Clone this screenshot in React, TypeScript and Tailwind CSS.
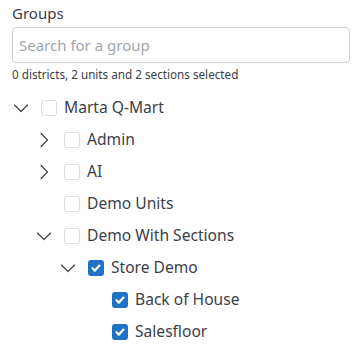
import React from 'react'

type Node = {
    label: string
    depth: number
    expander?: 'open' | 'closed'
    checked?: boolean
}

const rows: Node[] = [
    { label: 'Marta Q-Mart', depth: 0, expander: 'open' },
    { label: 'Admin', depth: 1, expander: 'closed' },
    { label: 'AI', depth: 1, expander: 'closed' },
    { label: 'Demo Units', depth: 1 },
    { label: 'Demo With Sections', depth: 1, expander: 'open' },
    { label: 'Store Demo', depth: 2, expander: 'open', checked: true },
    { label: 'Back of House', depth: 3, checked: true },
    { label: 'Salesfloor', depth: 3, checked: true },
]

const Chevron = ({ open }: { open: boolean }) => (
    <svg width="16" height="16" viewBox="0 0 16 16" fill="none" stroke="#3b4048" strokeWidth="1.2" strokeLinecap="round" strokeLinejoin="round">
        {open ? <path d="M1.5 5l6.5 6.5 6.5-6.5" /> : <path d="M5 1.5l6.5 6.5-6.5 6.5" />}
    </svg>
)

const Checkbox = ({ checked }: { checked?: boolean }) =>
    checked ? (
        <span className="flex h-4 w-4 items-center justify-center rounded-[3px] bg-[#1f72c4]">
            <svg width="12" height="12" viewBox="0 0 12 12" fill="none" stroke="white" strokeWidth="2.2" strokeLinecap="round" strokeLinejoin="round">
                <path d="M2.5 6.2l2.4 2.4 4.6-5" />
            </svg>
        </span>
    ) : (
        <span className="h-4 w-4 rounded-[3px] border border-[#d9dce0] bg-white" />
    )

const pad = ['pl-[9px]', 'pl-[32px]', 'pl-[56px]', 'pl-[80px]']

export default function App() {
    return (
        <div className="w-[362px] h-[350px] bg-white px-3 pt-[2px] text-[#3b4048]" style={{ fontFamily: '"Noto Sans", sans-serif' }}>
            <label className="block text-[15px] leading-[22px]">Groups</label>
            <div className="mt-[3px] flex h-9 w-[338px] items-center rounded-[4px] border border-[#c9d1d9] px-[6px]">
                <span className="text-[15px] text-[#a2a6ab]">Search for a group</span>
            </div>
            <p className="mt-[2px] text-[11.7px] leading-[18px]">0 districts, 2 units and 2 sections selected</p>
            <div className="-mx-3 mt-[9px]">
                {rows.map((r) => (
                    <div key={r.label} className={`flex h-8 items-center ${pad[r.depth]}`}>
                        <span className="mr-[8px] flex h-6 w-6 items-center justify-center">
                            {r.expander && <Chevron open={r.expander === 'open'} />}
                        </span>
                        <Checkbox checked={r.checked} />
                        <span className="ml-[7px] text-[15.6px]">{r.label}</span>
                    </div>
                ))}
            </div>
        </div>
    )
}
